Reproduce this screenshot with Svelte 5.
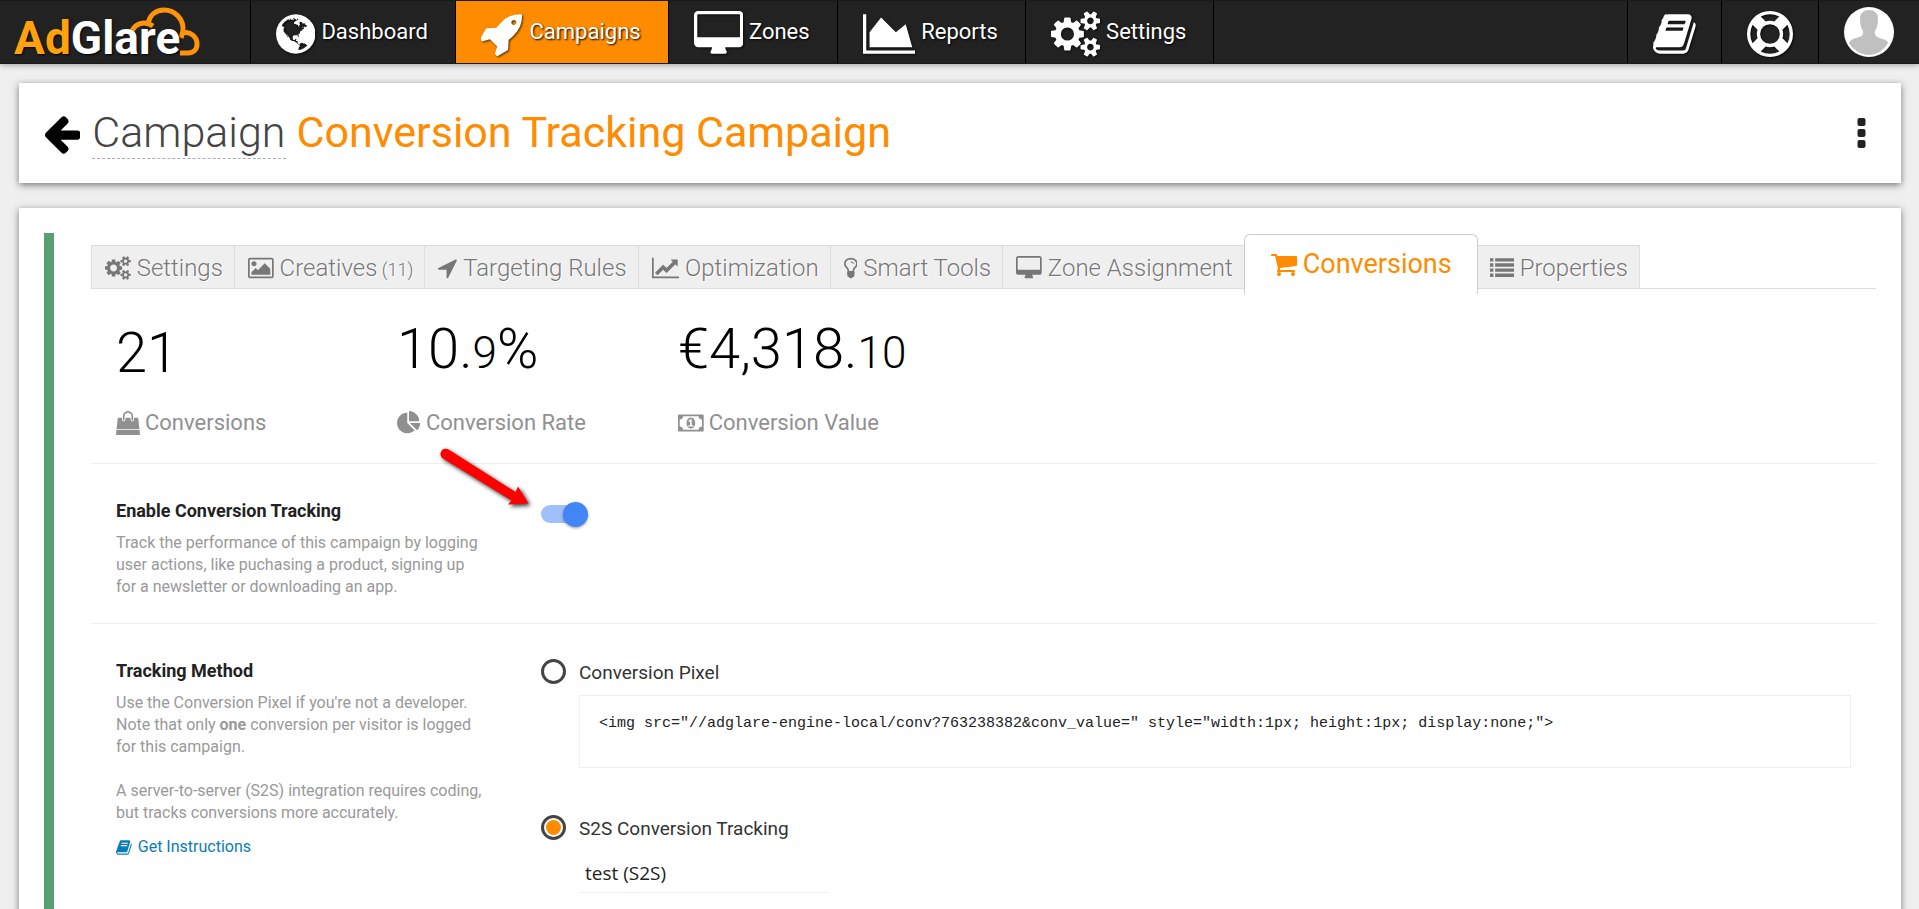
<script>
  const icons = {
    globe: {
      box: '128 0 1536 1792',
      d: 'M896 128q209 0 385.5 103t279.5 279.5 103 385.5-103 385.5-279.5 279.5-385.5 103-385.5-103-279.5-279.5-103-385.5 103-385.5 279.5-279.5 385.5-103zm274 521q-2 1-9.5 9.5t-13.5 9.5q2 0 4.5-5t5-11 3.5-7q6-7 22-15 14-6 52-12 34-8 51 11-2-2 9.5-13t14.5-12q3-2 15-4.5t15-7.5l2-22q-12 1-17.5-7t-6.5-21q0 2-6 8 0-7-4.5-8t-11.5 1-9 1q-10-3-15-7.5t-8-16.5-4-15q-2-5-9.5-11t-9.5-10q-1-2-2.5-5.5t-3-6.5-4-5.5-5.5-2.5-7 5-7.5 10-4.5 5q-3-2-6-1.5t-4.5 1-4.5 3-5 3.5q-3 2-8.5 3t-8.5 2q15-5-1-11-10-4-16-3 9-4 7.5-12t-8.5-14h5q-1-4-8.5-8.5t-17.5-8.5-13-6q-8-5-34-9.5t-33-.5q-5 6-4.5 10.5t4 14 3.5 12.5q1 6-5.5 13t-6.5 12q0 7 14 15.5t10 21.5q-3 8-16 16t-16 12q-5 8-1.5 18.5t10.5 16.5q2 2 1.5 4t-3.5 4.5-5.5 4-6.5 3.5l-3 2q-11 5-20.5-6t-13.5-26q-7-25-16-30-23-8-29 1-5-13-41-26-25-9-58-4 6-1 0-15-7-15-19-12 3-6 4-17.5t1-13.5q3-13 12-23 1-1 7-8.5t9.5-13.5.5-6q35 4 50-11 5-5 11.5-17t10.5-17q9-6 14-5.5t14.5 5.5 14.5 5q14 1 15.5-11t-7.5-20q12 1 3-17-4-7-8-9-12-4-27 5-8 4 2 8-1-1-9.5 10.5t-16.5 17.5-16-5q-1-1-5.5-13.5t-9.5-13.5q-8 0-16 15 3-8-11-15t-24-8q19-12-8-27-7-4-20.5-5t-19.5 4q-5 7-5.5 11.5t5 8 10.5 5.5 11.5 4 8.5 3q14 10 8 14-2 1-8.5 3.5t-11.5 4.5-6 4q-3 4 0 14t-2 14q-5-5-9-17.5t-7-16.5q7 9-25 6l-10-1q-4 0-16 2t-20.5 1-13.5-8q-4-8 0-20 1-4 4-2-4-3-11-9.5t-10-8.5q-46 15-94 41 6 1 12-1 5-2 13-6.5t10-5.5q34-14 42-7l5-5q14 16 20 25-7-4-30-1-20 6-22 12 7 12 5 18-4-3-11.5-10t-14.5-11-15-5q-16 0-22 1-146 80-235 222 7 7 12 8 4 1 5 9t2.5 11 11.5-3q9 8 3 19 1-1 44 27 19 17 21 21 3 11-10 18-1-2-9-9t-9-4q-3 5 .5 18.5t10.5 12.5q-7 0-9.5 16t-2.5 35.5-1 23.5l2 1q-3 12 5.5 34.5t21.5 19.5q-13 3 20 43 6 8 8 9 3 2 12 7.5t15 10 10 10.5q4 5 10 22.5t14 23.5q-2 6 9.5 20t10.5 23q-1 0-2.5 1t-2.5 1q3 7 15.5 14t15.5 13q1 3 2 10t3 11 8 2q2-20-24-62-15-25-17-29-3-5-5.5-15.5t-4.5-14.5q2 0 6 1.5t8.5 3.5 7.5 4 2 3q-3 7 2 17.5t12 18.5 17 19 12 13q6 6 14 19.5t0 13.5q9 0 20 10.5t17 19.5q5 8 8 26t5 24q2 7 8.5 13.5t12.5 9.5l16 8 13 7q5 2 18.5 10.5t21.5 11.5q10 4 16 4t14.5-2.5 13.5-3.5q15-2 29 15t21 21q36 19 55 11-2 1 .5 7.5t8 15.5 9 14.5 5.5 8.5q5 6 18 15t18 15q6-4 7-9-3 8 7 20t18 10q14-3 14-32-31 15-49-18 0-1-2.5-5.5t-4-8.5-2.5-8.5 0-7.5 5-3q9 0 10-3.5t-2-12.5-4-13q-1-8-11-20t-12-15q-5 9-16 8t-16-9q0 1-1.5 5.5t-1.5 6.5q-13 0-15-1 1-3 2.5-17.5t3.5-22.5q1-4 5.5-12t7.5-14.5 4-12.5-4.5-9.5-17.5-2.5q-19 1-26 20-1 3-3 10.5t-5 11.5-9 7q-7 3-24 2t-24-5q-13-8-22.5-29t-9.5-37q0-10 2.5-26.5t3-25-5.5-24.5q3-2 9-9.5t10-10.5q2-1 4.5-1.5t4.5 0 4-1.5 3-6q-1-1-4-3-3-3-4-3 7 3 28.5-1.5t27.5 1.5q15 11 22-2 0-1-2.5-9.5t-.5-13.5q5 27 29 9 3 3 15.5 5t17.5 5q3 2 7 5.5t5.5 4.5 5-.5 8.5-6.5q10 14 12 24 11 40 19 44 7 3 11 2t4.5-9.5 0-14-1.5-12.5l-1-8v-18l-1-8q-15-3-18.5-12t1.5-18.5 15-18.5q1-1 8-3.5t15.5-6.5 12.5-8q21-19 15-35 7 0 11-9-1 0-5-3t-7.5-5-4.5-2q9-5 2-16 5-3 7.5-11t7.5-10q9 12 21 2 7-8 1-16 5-7 20.5-10.5t18.5-9.5q7 2 8-2t1-12 3-12q4-5 15-9t13-5l17-11q3-4 0-4 18 2 31-11 10-11-6-20 3-6-3-9.5t-15-5.5q3-1 11.5-.5t10.5-1.5q15-10-7-16-17-5-43 12zm-163 877q206-36 351-189-3-3-12.5-4.5t-12.5-3.5q-18-7-24-8 1-7-2.5-13t-8-9-12.5-8-11-7q-2-2-7-6t-7-5.5-7.5-4.5-8.5-2-10 1l-3 1q-3 1-5.5 2.5t-5.5 3-4 3 0 2.5q-21-17-36-22-5-1-11-5.5t-10.5-7-10-1.5-11.5 7q-5 5-6 15t-2 13q-7-5 0-17.5t2-18.5q-3-6-10.5-4.5t-12 4.5-11.5 8.5-9 6.5-8.5 5.5-8.5 7.5q-3 4-6 12t-5 11q-2-4-11.5-6.5t-9.5-5.5q2 10 4 35t5 38q7 31-12 48-27 25-29 40-4 22 12 26 0 7-8 20.5t-7 21.5q0 6 2 16z'
    },
    rocket: {
      box: '64 0 1664 1792',
      d: 'M1440 448q0-40-28-68t-68-28-68 28-28 68 28 68 68 28 68-28 28-68zm224-288q0 249-75.5 430.5t-253.5 360.5q-81 80-195 176l-20 379q-2 16-16 26l-384 224q-7 4-16 4-12 0-23-9l-64-64q-13-14-8-32l85-276-281-281-276 85q-3 1-9 1-14 0-23-9l-64-64q-17-19-5-39l224-384q10-14 26-16l379-20q96-114 176-195 188-187 358-258t431-71q14 0 24 9.5t10 22.5z'
    },
    desktop: {
      box: '0 0 1920 1792',
      d: 'M1792 992v-832q0-13-9.5-22.5t-22.5-9.5h-1600q-13 0-22.5 9.5t-9.5 22.5v832q0 13 9.5 22.5t22.5 9.5h1600q13 0 22.5-9.5t9.5-22.5zm128-832v1088q0 66-47 113t-113 47h-544q0 37 16 77.5t32 71 16 43.5q0 26-19 45t-45 19h-512q-26 0-45-19t-19-45q0-14 16-44t32-70 16-78h-544q-66 0-113-47t-47-113v-1088q0-66 47-113t113-47h1600q66 0 113 47t47 113z'
    },
    area: {
      box: '0 0 2048 1792',
      d: 'M2048 1536v128h-2048v-1536h128v1408h1920zm-384-1024l256 896h-1664v-576l448-576 576 576z'
    },
    line: {
      box: '0 0 2048 1792',
      d: 'M2048 1536v128h-2048v-1536h128v1408h1920zm-128-1248v435q0 21-19.5 29.5t-35.5-7.5l-121-121-633 633q-10 10-23 10t-23-10l-233-233-416 416-192-192 585-585q10-10 23-10t23 10l233 233 464-464-121-121q-16-16-7.5-35.5t29.5-19.5h435q14 0 23 9t9 23z'
    },
    cogs: {
      box: '0 0 1920 1792',
      d: 'M896 896q0-106-75-181t-181-75-181 75-75 181 75 181 181 75 181-75 75-181zm768 512q0-52-38-90t-90-38-90 38-38 90q0 53 37.5 90.5t90.5 37.5 90.5-37.5 37.5-90.5zm0-1024q0-52-38-90t-90-38-90 38-38 90q0 53 37.5 90.5t90.5 37.5 90.5-37.5 37.5-90.5zm-384 421v185q0 10-7 19.5t-16 10.5l-155 24q-11 35-32 76 34 48 90 115 7 11 7 20 0 12-7 19-23 30-82.5 89.5t-78.5 59.5q-11 0-21-7l-115-90q-37 19-77 31-11 108-23 155-7 24-30 24h-186q-11 0-20-7.5t-10-17.5l-23-153q-34-10-75-31l-118 89q-7 7-20 7-11 0-21-8-144-133-144-160 0-9 7-19 10-14 41-53t47-61q-23-44-35-82l-152-24q-10-1-17-9.5t-7-19.5v-185q0-10 7-19.5t16-10.5l155-24q11-35 32-76-34-48-90-115-7-11-7-20 0-12 7-20 22-30 82-89t79-59q11 0 21 7l115 90q34-18 77-32 11-108 23-154 7-24 30-24h186q11 0 20 7.5t10 17.5l23 153q34 10 75 31l118-89q8-7 20-7 11 0 21 8 144 133 144 160 0 8-7 19-12 16-42 54t-45 60q23 48 34 82l152 23q10 2 17 10.5t7 19.5zm640 533v140q0 16-149 31-12 27-30 52 51 113 51 138 0 4-4 7-122 71-124 71-8 0-46-47t-52-68q-20 2-30 2t-30-2q-14 21-52 68t-46 47q-2 0-124-71-4-3-4-7 0-25 51-138-18-25-30-52-149-15-149-31v-140q0-16 149-31 13-29 30-52-51-113-51-138 0-4 4-7 4-2 35-20t59-34 30-16q8 0 46 46.5t52 67.5q20-2 30-2t30 2q51-71 92-112l6-2q4 0 124 70 4 3 4 7 0 25-51 138 17 23 30 52 149 15 149 31zm0-1024v140q0 16-149 31-12 27-30 52 51 113 51 138 0 4-4 7-122 71-124 71-8 0-46-47t-52-68q-20 2-30 2t-30-2q-14 21-52 68t-46 47q-2 0-124-71-4-3-4-7 0-25 51-138-18-25-30-52-149-15-149-31v-140q0-16 149-31 13-29 30-52-51-113-51-138 0-4 4-7 4-2 35-20t59-34 30-16q8 0 46 46.5t52 67.5q20-2 30-2t30 2q51-71 92-112l6-2q4 0 124 70 4 3 4 7 0 25-51 138 17 23 30 52 149 15 149 31z'
    },
    book: {
      box: '64 0 1664 1792',
      d: 'M1703 478q40 57 18 129l-275 906q-19 64-76.5 107.5t-122.5 43.5h-923q-77 0-148.5-53.5t-99.5-131.5q-24-67-2-127 0-4 3-27t4-37q1-8-3-21.5t-3-19.5q2-11 8-21t16.5-23.5 16.5-23.5q23-38 45-91.5t30-91.5q3-10 .5-30t-.5-28q3-11 17-28t17-23q21-36 42-92t25-90q1-9-2.5-32t.5-28q4-13 22-30.5t22-22.5q19-26 42.5-84.5t27.5-96.5q1-8-3-25.5t-2-26.5q2-8 9-18t18-23 17-21q8-12 16.5-30.5t15-35 16-36 19.5-32 26.5-23.5 36-11.5 47.5 5.5l-1 3q38-9 51-9h761q74 0 114 56t18 130l-274 906q-36 119-71.5 153.5t-128.5 34.5h-869q-27 0-38 15-11 16-1 43 24 70 144 70h923q29 0 56-15.5t35-41.5l300-987q7-22 5-57 38 15 59 43zm-1064 2q-4 13 2 22.5t20 9.5h608q13 0 25.5-9.5t16.5-22.5l21-64q4-13-2-22.5t-20-9.5h-608q-13 0-25.5 9.5t-16.5 22.5zm-83 256q-4 13 2 22.5t20 9.5h608q13 0 25.5-9.5t16.5-22.5l21-64q4-13-2-22.5t-20-9.5h-608q-13 0-25.5 9.5t-16.5 22.5z'
    },
    ring: {
      box: '0 0 1792 1792',
      d: 'M896 0q182 0 348 71t286 191 191 286 71 348-71 348-191 286-286 191-348 71-348-71-286-191-191-286-71-348 71-348 191-286 286-191 348-71zm0 128q-190 0-361 90l194 194q82-28 167-28t167 28l194-194q-171-90-361-90zm-678 1129l194-194q-28-82-28-167t28-167l-194-194q-90 171-90 361t90 361zm678 407q190 0 361-90l-194-194q-82 28-167 28t-167-28l-194 194q171 90 361 90zm0-384q159 0 271.5-112.5t112.5-271.5-112.5-271.5-271.5-112.5-271.5 112.5-112.5 271.5 112.5 271.5 271.5 112.5zm484-217l194 194q90-171 90-361t-90-361l-194 194q28 82 28 167t-28 167z'
    },
    picture: {
      box: '0 0 1920 1792',
      d: 'M640 576q0 80-56 136t-136 56-136-56-56-136 56-136 136-56 136 56 56 136zm1024 384v448h-1408v-192l320-320 160 160 512-512zm96-704h-1600q-13 0-22.5 9.5t-9.5 22.5v1216q0 13 9.5 22.5t22.5 9.5h1600q13 0 22.5-9.5t9.5-22.5v-1216q0-13-9.5-22.5t-22.5-9.5zm160 32v1216q0 66-47 113t-113 47h-1600q-66 0-113-47t-47-113v-1216q0-66 47-113t113-47h1600q66 0 113 47t47 113z'
    },
    location: {
      box: '192 0 1408 1792',
      d: 'M1593 349l-640 1280q-17 35-57 35-5 0-15-2-22-5-35.5-22.5t-13.5-39.5v-576h-576q-22 0-39.5-13.5t-22.5-35.5 4-42 29-30l1280-640q13-7 29-7 27 0 45 19 15 14 18.5 34.5t-6.5 39.5z'
    },
    bulb: {
      box: '384 0 1024 1792',
      d: 'M1120 576q0 13-9.5 22.5t-22.5 9.5-22.5-9.5-9.5-22.5q0-46-54-71t-106-25q-13 0-22.5-9.5t-9.5-22.5 9.5-22.5 22.5-9.5q50 0 99.5 16t87 54 37.5 90zm160 0q0-72-34.5-134t-90-101.5-123-62-136.5-22.5-136.5 22.5-123 62-90 101.5-34.5 134q0 101 68 180 10 11 30.5 33t30.5 33q128 153 141 298h228q13-145 141-298 10-11 30.5-33t30.5-33q68-79 68-180zm128 0q0 155-103 268-45 49-74.5 87t-59.5 95.5-34 107.5q47 28 47 82 0 37-25 64 25 27 25 64 0 52-45 81 13 23 13 47 0 46-31.5 71t-77.5 25q-20 44-60 70t-87 26-87-26-60-70q-46 0-77.5-25t-31.5-71q0-24 13-47-45-29-45-81 0-37 25-64-25-27-25-64 0-54 47-82-4-50-34-107.5t-59.5-95.5-74.5-87q-103-113-103-268 0-99 44.5-184.5t117-142 164-89 186.5-32.5 186.5 32.5 164 89 117 142 44.5 184.5z'
    },
    cart: {
      box: '64 0 1664 1792',
      d: 'M704 1536q0 52-38 90t-90 38-90-38-38-90 38-90 90-38 90 38 38 90zm896 0q0 52-38 90t-90 38-90-38-38-90 38-90 90-38 90 38 38 90zm128-1088v512q0 24-16.5 42.5t-40.5 21.5l-1044 122q13 60 13 70 0 16-24 64h920q26 0 45 19t19 45-19 45-45 19h-1024q-26 0-45-19t-19-45q0-11 8-31.5t16-36 21.5-40 15.5-29.5l-177-823h-204q-26 0-45-19t-19-45 19-45 45-19h256q16 0 28.5 6.5t19.5 15.5 13 24.5 8 26 5.5 29.5 4.5 26h1201q26 0 45 19t19 45z'
    },
    list: {
      box: '0 0 1792 1792',
      d: 'M0 160h256v256h-256zM384 160h1408v256h-1408zM0 544h256v256h-256zM384 544h1408v256h-1408zM0 928h256v256h-256zM384 928h1408v256h-1408zM0 1312h256v256h-256zM384 1312h1408v256h-1408z'
    },
    bag: {
      box: '0 0 1792 1792',
      d: 'M1757 1408l35 313q3 28-16 50-19 21-48 21h-1664q-29 0-48-21-19-22-16-50l35-313h1722zm-93-839l86 775h-1708l86-775q3-24 21-40.5t43-16.5h256v128q0 53 37.5 90.5t90.5 37.5 90.5-37.5 37.5-90.5v-128h384v128q0 53 37.5 90.5t90.5 37.5 90.5-37.5 37.5-90.5v-128h256q25 0 43 16.5t21 40.5zm-384-185v256q0 26-19 45t-45 19-45-19-19-45v-256q0-106-75-181t-181-75-181 75-75 181v256q0 26-19 45t-45 19-45-19-19-45v-256q0-159 112.5-271.5t271.5-112.5 271.5 112.5 112.5 271.5z'
    },
    pie: {
      box: '0 0 1792 1792',
      d: 'M768 890l546 546q-106 108-247.5 168t-298.5 60q-209 0-385.5-103t-279.5-279.5-103-385.5 103-385.5 279.5-279.5 385.5-103v762zm187 6h773q0 157-60 298.5t-168 247.5zm709-128h-768v-768q209 0 385.5 103t279.5 279.5 103 385.5z'
    },
    money: {
      box: '0 0 1920 1792',
      d: 'M768 1152h384v-96h-128v-448h-114l-148 137 77 80q42-37 55-57h2v288h-128v96zm512-256q0 70-21 142t-59.5 134-101.5 101-138 39-138-39-101.5-101-59.5-134-21-142 21-142 59.5-134 101.5-101 138-39 138 39 101.5 101 59.5 134 21 142zm512 256v-512q-106 0-181-75t-75-181h-1152q0 106-75 181t-181 75v512q106 0 181 75t75 181h1152q0-106 75-181t181-75zm128-832v1152q0 26-19 45t-45 19h-1792q-26 0-45-19t-19-45v-1152q0-26 19-45t45-19h1792q26 0 45 19t19 45z'
    },
    back: {
      box: '192 0 1472 1792',
      d: 'M1664 896v128q0 53-32.5 90.5t-84.5 37.5h-704l293 294q38 36 38 90t-38 90l-75 76q-37 37-90 37-52 0-91-37l-651-652q-37-37-37-90 0-52 37-91l651-650q38-38 91-38 52 0 90 38l75 74q38 38 38 91t-38 91l-293 293h704q52 0 84.5 37.5t32.5 90.5z'
    }
  };

  const nav = [
    { label: 'Dashboard', icon: 'globe' },
    { label: 'Campaigns', icon: 'rocket', active: true },
    { label: 'Zones', icon: 'desktop' },
    { label: 'Reports', icon: 'area' },
    { label: 'Settings', icon: 'cogs' }
  ];

  const tabs = [
    { label: 'Settings', icon: 'cogs' },
    { label: 'Creatives', icon: 'picture', count: 11 },
    { label: 'Targeting Rules', icon: 'location' },
    { label: 'Optimization', icon: 'line' },
    { label: 'Smart Tools', icon: 'bulb' },
    { label: 'Zone Assignment', icon: 'desktop' },
    { label: 'Conversions', icon: 'cart' },
    { label: 'Properties', icon: 'list' }
  ];

  const pixelCode =
    '<img src="//adglare-engine-local/conv?763238382&conv_value=" style="width:1px; height:1px; display:none;">';

  let activeTab = $state('Conversions');
  let trackingEnabled = $state(true);
  let method = $state('s2s');
  let s2sTracker = $state('test');
</script>

{#snippet icon(name)}
  <svg class="icon" viewBox={icons[name].box} aria-hidden="true">
    <path d={icons[name].d} />
  </svg>
{/snippet}

<div class="page">
  <header class="topbar">
    <a class="logo" href="#home">
      <svg class="cloud" viewBox="0 0 76 52" aria-hidden="true">
        <path d="M7 26C10 19 19 15 28 21M23 20C24 9 32 5 39 5C50 5 59 14 58 26L56 33M57 28C66 26 72 32 72 39C72 45 68 48 63 48H55" />
      </svg>
      <span class="logo-text"><span class="ad">Ad</span>Glare</span>
    </a>
    <nav class="menu">
      {#each nav as item}
        <a class="menu-item" class:active={item.active} href="#{item.label.toLowerCase()}">
          {@render icon(item.icon)}
          <span class="menu-label">{item.label}</span>
        </a>
      {/each}
    </nav>
    <div class="tools">
      <a class="menu-item" href="#manual" aria-label="Manual">{@render icon('book')}</a>
      <a class="menu-item" href="#support" aria-label="Support">{@render icon('ring')}</a>
      <a class="menu-item" href="#account" aria-label="Account">
        <svg class="avatar" viewBox="0 0 50 50" aria-hidden="true">
          <circle cx="25" cy="25" r="25" fill="#fff" />
          <path fill="#c0c0c0" d="M25 3C30 3 34 6 34 11C34 17 33 21 31 24C30 29 34 31 39 32C42 33 44 34 44 36C40 43 33 48 25 48C17 48 9 43 5 36C6 33 9 32 12 31C17 30 20 28 19 24C17 21 16 17 16 11C16 6 20 3 25 3Z" />
        </svg>
      </a>
    </div>
  </header>

  <section class="card title-card">
    <a class="back" href="#campaigns" aria-label="Back">{@render icon('back')}</a>
    <h1><span class="kind">Campaign</span><span class="name">Conversion Tracking Campaign</span></h1>
    <button class="more" aria-label="More actions">
      <svg viewBox="0 0 8 30" aria-hidden="true">
        <rect width="8" height="8" rx="2" />
        <rect y="11" width="8" height="8" rx="2" />
        <rect y="22" width="8" height="8" rx="2" />
      </svg>
    </button>
  </section>

  <main class="card main-card">
    <div class="status-bar"></div>
    <div class="content">
      <div class="tabs">
        {#each tabs as tab}
          <button class="tab" class:current={tab.label === activeTab} onclick={() => (activeTab = tab.label)}>
            {@render icon(tab.icon)}
            <span>{tab.label}{#if tab.count}<small>&nbsp;({tab.count})</small>{/if}</span>
          </button>
        {/each}
      </div>

      <div class="stats">
        <div class="stat">
          <div class="value">21</div>
          <div class="caption">{@render icon('bag')}<span>Conversions</span></div>
        </div>
        <div class="stat">
          <div class="value">10.<span class="decimals">9</span>%</div>
          <div class="caption">{@render icon('pie')}<span>Conversion Rate</span></div>
        </div>
        <div class="stat">
          <div class="value">€4,318.<span class="decimals">10</span></div>
          <div class="caption">{@render icon('money')}<span>Conversion Value</span></div>
        </div>
      </div>

      <div class="setting">
        <div class="info">
          <h2><label for="tracking">Enable Conversion Tracking</label></h2>
          <p>
            Track the performance of this campaign by logging user actions, like puchasing a product, signing
            up for a newsletter or downloading an app.
          </p>
        </div>
        <div class="control">
          <input id="tracking" class="switch" type="checkbox" bind:checked={trackingEnabled} />
          <svg class="pointer" viewBox="0 0 100 70" aria-hidden="true">
            <path d="M9.500 5.500L76.500 48L79 42.500L89.500 59.500L69 60.500L72.500 56.500L4 14.500A5 5 0 0 1 9.500 5.500Z" />
          </svg>
        </div>
      </div>

      <div class="setting">
        <div class="info">
          <h2>Tracking Method</h2>
          <p>
            Use the Conversion Pixel if you're not a developer. Note that only <b>one</b> conversion per visitor
            is logged for this campaign.
          </p>
          <p class="next">A server-to-server (S2S) integration requires coding, but tracks conversions more accurately.</p>
          <a class="help" href="#instructions">{@render icon('book')}<span>Get Instructions</span></a>
        </div>
        <div class="control">
          <label class="choice">
            <input type="radio" name="method" value="pixel" bind:group={method} />
            <span>Conversion Pixel</span>
          </label>
          <pre class="code">{pixelCode}</pre>
          <label class="choice">
            <input type="radio" name="method" value="s2s" bind:group={method} />
            <span>S2S Conversion Tracking</span>
          </label>
          <select class="tracker" aria-label="S2S tracker" bind:value={s2sTracker}>
            <option value="test">test (S2S)</option>
          </select>
        </div>
      </div>
    </div>
  </main>
</div>

<style>
  :global(body) {
    background: #efefef;
    font-family: Roboto, sans-serif;
    color: #222;
  }

  .page {
    display: flex;
    flex-direction: column;
    min-height: 100vh;
    overflow: hidden;
  }

  .page * {
    box-sizing: border-box;
  }

  a {
    text-decoration: none;
  }

  button {
    font-family: inherit;
    border: none;
    background: none;
    cursor: pointer;
  }

  .icon {
    height: 24px;
    flex: none;
    fill: currentColor;
  }

  /* top bar */
  .topbar {
    display: flex;
    height: 64px;
    border: solid #1a1a1a;
    border-width: 1px 0;
    background: #222;
    box-shadow: 0 1px 6px rgba(0, 0, 0, 0.35);
  }

  .logo {
    position: relative;
    width: 250px;
    padding-left: 14px;
    color: #fff;
  }

  .logo-text {
    position: relative;
    font-size: 46px;
    line-height: 74px;
    font-weight: 700;
    text-shadow: 1px 1px 2px #000;
  }

  .logo .ad {
    color: #ffa20d;
  }

  .cloud {
    position: absolute;
    left: 125px;
    top: 4px;
    width: 76px;
    height: 52px;
    fill: none;
    stroke: #ff940a;
    stroke-width: 5;
  }

  .menu,
  .tools {
    display: flex;
  }

  .tools {
    margin-left: auto;
  }

  .menu {
    border-right: 1px solid #000;
  }

  .menu-item {
    display: flex;
    align-items: center;
    gap: 6px;
    padding: 0 25px;
    border-left: 1px solid #000;
    color: #fff;
    font-size: 22px;
  }

  .menu .menu-item {
    padding-right: 27px;
  }

  .menu-item.active {
    background: #ff8c00;
  }

  .menu-item .icon {
    height: 46px;
    margin-top: 4px;
    filter: drop-shadow(1px 1px 1px rgba(0, 0, 0, 0.7));
  }

  .menu-label {
    margin-bottom: 2px;
    text-shadow: 1px 1px 2px #000;
  }

  .avatar {
    width: 50px;
    height: 50px;
  }

  /* cards */
  .card {
    margin: 19px 18px 0 19px;
    background: #fff;
    box-shadow: 0 2px 7px rgba(0, 0, 0, 0.5);
  }

  .title-card {
    display: flex;
    align-items: center;
    height: 100px;
    padding: 0 35px 0 26px;
  }

  .back {
    display: flex;
    color: #000;
  }

  .back .icon {
    height: 43px;
  }

  h1 {
    display: flex;
    gap: 11px;
    margin: 0 auto 0 12px;
    font-size: 43px;
    line-height: 48px;
    font-weight: 400;
  }

  .kind {
    padding-bottom: 2px;
    border-bottom: 1px dashed #aaa;
    color: #444;
    font-weight: 300;
  }

  .name {
    color: #ff8c00;
  }

  .more {
    display: flex;
    padding: 0;
  }

  .more svg {
    width: 9px;
    height: 30px;
    fill: #222;
  }

  .main-card {
    display: flex;
    flex: 1;
    margin-top: 25px;
    padding: 25px 25px 0;
  }

  .status-bar {
    width: 10px;
    background: #5a9f71;
  }

  .content {
    flex: 1;
    min-width: 0;
    margin-left: 37px;
    padding-top: 12px;
  }

  /* tabs */
  .tabs {
    display: flex;
    align-items: stretch;
    height: 44px;
    border-bottom: 1px solid #ddd;
  }

  .tab {
    display: flex;
    align-items: center;
    gap: 6px;
    padding: 2px 11px 0 13px;
    border: 1px solid #ddd;
    border-width: 1px 0 0 1px;
    background: #efefef;
    color: #777;
    font-size: 24px;
    font-weight: 300;
    white-space: nowrap;
    text-shadow: 1px 1px 0 #fff;
  }

  .tab:last-child {
    border-right-width: 1px;
  }

  .tab small {
    font-size: 18px;
  }

  .tab.current {
    margin: -11px 0 -6px;
    padding: 0 25px 2px 26px;
    border-color: #ccc;
    border-right-width: 1px;
    border-radius: 6px 6px 0 0;
    background: #fff;
    color: #ff8c00;
    font-size: 27px;
    font-weight: 400;
  }

  .tab.current + .tab {
    padding-left: 12px;
    border-left-width: 0;
  }

  .tab.current .icon {
    height: 28px;
  }

  /* figures */
  .stats {
    display: flex;
    align-items: flex-end;
    height: 175px;
    padding: 0 25px 27px;
    border-bottom: 1px solid #eee;
  }

  .stat {
    flex: 0 0 281px;
  }

  .value {
    color: #000;
    font-size: 56px;
    line-height: 76px;
    font-weight: 300;
  }

  .decimals {
    font-size: 44px;
  }

  .caption {
    display: flex;
    align-items: center;
    gap: 5px;
    margin-top: 19px;
    color: #909090;
    font-size: 22px;
    line-height: 26px;
  }

  /* settings */
  .setting {
    display: flex;
    padding: 35px 25px 25px;
    border-bottom: 1px solid #eee;
  }

  .setting:last-child {
    border-bottom: none;
  }

  .info {
    flex: 0 0 370px;
    margin-right: 55px;
  }

  h2 {
    margin: 0 0 9px;
    font-size: 18px;
    line-height: 24px;
    font-weight: 700;
  }

  p {
    margin: 0;
    color: #999;
    font-size: 16px;
    line-height: 22px;
  }

  p.next {
    margin-top: 22px;
  }

  .help {
    display: flex;
    align-items: center;
    gap: 6px;
    margin-top: 12px;
    color: #0a7cb5;
    font-size: 16px;
    line-height: 22px;
  }

  .help .icon {
    height: 17px;
  }

  .control {
    position: relative;
    flex: 1;
    min-width: 0;
  }

  .switch {
    appearance: none;
    display: flex;
    align-items: center;
    width: 44px;
    height: 18px;
    margin: 6px 0 0;
    border-radius: 9px;
    background: #ccc;
  }

  .switch::before {
    content: '';
    width: 25px;
    height: 25px;
    flex: none;
    border-radius: 50%;
    background: #fff;
    box-shadow: 0 1px 3px rgba(0, 0, 0, 0.4);
  }

  .switch:checked {
    background: #a0c0fb;
  }

  .switch:checked::before {
    margin-left: 22px;
    background: #4285f4;
  }

  .pointer {
    position: absolute;
    left: -102px;
    top: -55px;
    width: 100px;
    height: 70px;
    fill: #f00;
    filter: drop-shadow(2px 2px 2px rgba(0, 0, 0, 0.8));
  }

  .choice {
    display: flex;
    align-items: center;
    gap: 13px;
    height: 25px;
    color: #333;
    font-size: 19px;
  }

  .choice span {
    padding-top: 2px;
  }

  .choice input {
    appearance: none;
    width: 25px;
    height: 25px;
    margin: 0;
    border: 3px solid #444;
    border-radius: 50%;
    background: #fff;
  }

  .choice input:checked {
    padding: 2px;
    background: #ff8c00 content-box;
  }

  .code {
    height: 73px;
    margin: 11px 0 47px 38px;
    padding: 19px;
    border: 1px solid #eee;
    color: #222;
    font-family: 'Courier New', 'Liberation Mono', monospace;
    font-size: 15px;
    line-height: 18px;
    overflow: hidden;
  }

  .tracker {
    appearance: none;
    display: block;
    width: 250px;
    height: 38px;
    margin: 15px 0 0 38px;
    padding: 0 6px 2px;
    border: none;
    border-bottom: 1px solid #eee;
    border-radius: 0;
    background: #fff;
    color: #222;
    font-family: 'Open Sans', sans-serif;
    font-size: 19px;
  }
</style>
